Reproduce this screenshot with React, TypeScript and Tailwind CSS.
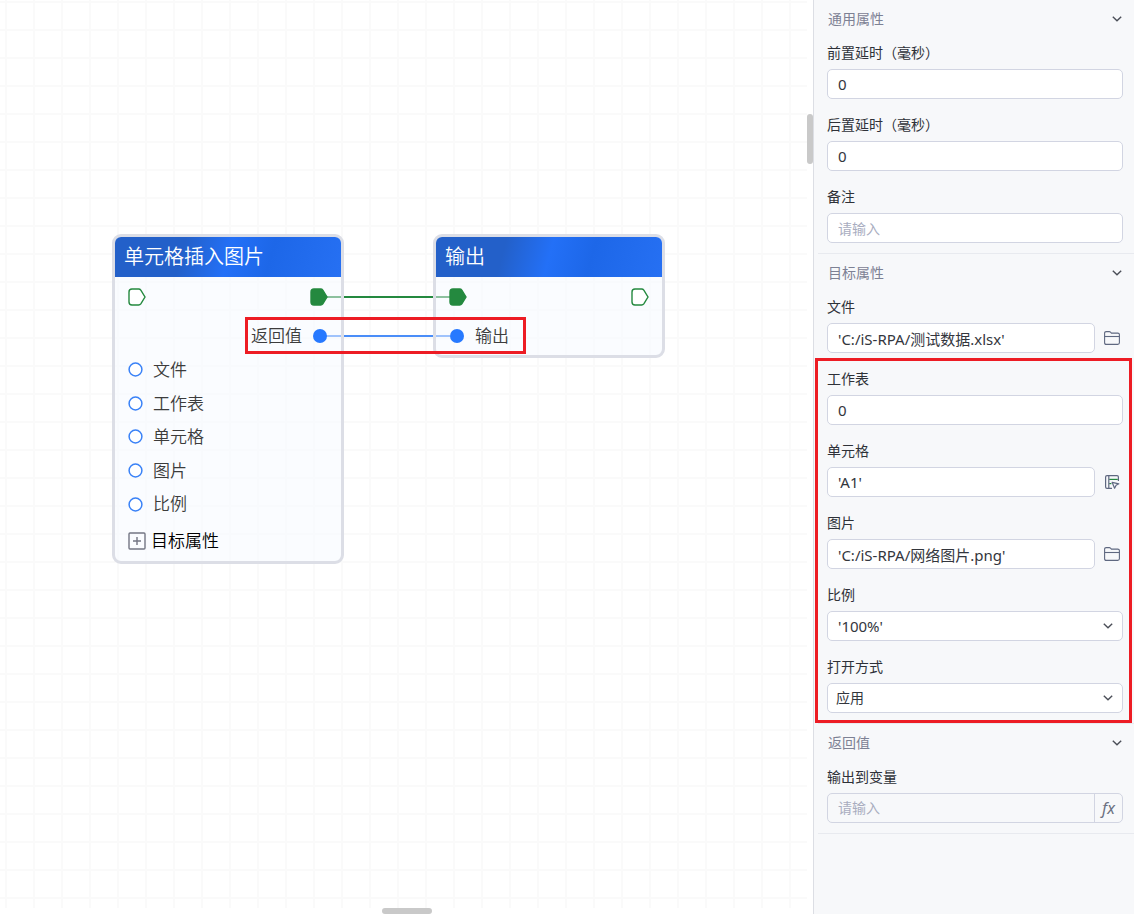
import type { ReactNode } from 'react';

interface FieldProps {
  id: string;
  label: string;
  children: ReactNode;
}

interface TextInputProps {
  id: string;
  value?: string;
  placeholder?: string;
}

interface SelectInputProps {
  id: string;
  options: string[];
  className: string;
}

const Chevron = ({ className }: { className: string }) => (
  <svg viewBox="0 0 10 6" className={className} fill="none" stroke="#4b4f58" strokeWidth="1.4">
    <path d="M0.8 0.8 5 4.8 9.2 0.8" />
  </svg>
);

const FolderIcon = () => (
  <svg viewBox="0 0 16 14" className="h-[14px] w-4" fill="none" stroke="#5f6880" strokeWidth="1.1">
    <path d="M0.6 2.2Q0.6 0.6 2.2 0.6H5.4Q6 0.6 6.5 1.2L7.4 2.1H13.8Q15.4 2.1 15.4 3.6V11.8Q15.4 13.4 13.8 13.4H2.2Q0.6 13.4 0.6 11.8Z" />
    <path d="M0.6 5.5H15.4" />
  </svg>
);

const CellPickIcon = () => (
  <svg viewBox="0 0 16 16" className="h-4 w-4" fill="none" stroke="#5f6880" strokeWidth="1.2">
    <path d="M5.2 5.4H13.8" stroke="#24893f" />
    <path d="M5.2 9.6H7.4" stroke="#24893f" />
    <path d="M8 14.4H3Q1.6 14.4 1.6 13V3Q1.6 1.6 3 1.6H13Q14.4 1.6 14.4 3V7" />
    <path d="M4.8 1.6V14.4" />
    <path d="M8.2 8.4 14.8 9.8 12.1 11.3 10.6 14.2Z" strokeLinejoin="round" />
  </svg>
);

const Field = ({ id, label, children }: FieldProps) => (
  <div className="flex flex-col gap-[6px]">
    <label htmlFor={id} className="text-sm leading-5 text-[#2e3138]">
      {label}
    </label>
    {children}
  </div>
);

const TextInput = ({ id, value, placeholder }: TextInputProps) => (
  <input
    id={id}
    type="text"
    defaultValue={value}
    placeholder={placeholder}
    className="h-[30px] w-full min-w-0 rounded-[5px] border border-[#d2d5e2] bg-white px-[10px] text-[15px] text-[#33363d] placeholder:text-sm placeholder:text-[#a9adbf]"
  />
);

const SelectInput = ({ id, options, className }: SelectInputProps) => (
  <div className="relative">
    <select
      id={id}
      className={`h-[30px] w-full appearance-none rounded-[5px] border border-[#d2d5e2] bg-white pr-8 text-[#33363d] ${className}`}
    >
      {options.map((option) => (
        <option key={option}>{option}</option>
      ))}
    </select>
    <Chevron className="pointer-events-none absolute top-3 right-[10px] h-[6px] w-[10px]" />
  </div>
);

const PickerInput = ({ id, value, title, icon }: TextInputProps & { title: string; icon: ReactNode }) => (
  <div className="flex items-center gap-[9px] pr-[3px]">
    <TextInput id={id} value={value} />
    <button type="button" aria-label={title} className="flex w-4 shrink-0 justify-center">
      {icon}
    </button>
  </div>
);

const Section = ({ title, children }: { title: string; children: ReactNode }) => (
  <section className="ml-1 border-b border-[#e8eaef] pr-[11px] pb-[10px] pl-[9px]">
    <button type="button" className="mb-[5px] flex h-[38px] w-full items-center justify-between px-[1px] text-sm text-[#7d8194]">
      {title}
      <Chevron className="h-[6px] w-[10px]" />
    </button>
    <div className="flex flex-col gap-4">{children}</div>
  </section>
);

const ExecPort = ({ filled = false }: { filled?: boolean }) => (
  <svg viewBox="0 0 18 18" className="h-[18px] w-[18px]" fill={filled ? '#24893f' : '#ffffff'} stroke="#24893f" strokeWidth="1.4">
    <path d="M4 1H10.6Q12 1 12.8 2.1L17 9 12.8 15.9Q12 17 10.6 17H4Q1 17 1 14V4Q1 1 4 1Z" />
  </svg>
);

const NodeCard = ({ title, className, children }: { title: string; className: string; children: ReactNode }) => (
  <div className={`absolute w-[232px] rounded-[9px] border-[3px] border-[#dcdee6] bg-[#f5f9ff]/50 text-[17px] font-[350] text-[#3c3c3c] ${className}`}>
    <h2 className="flex h-10 items-center rounded-t-[6px] bg-[linear-gradient(105deg,#2360c9_0%,#2360c9_30%,#2370f7_50%,#1d67e8_68%,#2670f3_100%)] px-[9px] text-xl text-white">
      {title}
    </h2>
    {children}
  </div>
);

const Canvas = () => (
  <main className="relative flex flex-1 overflow-hidden bg-white pr-[6px] pb-[6px]">
    <div className="flex-1 bg-[linear-gradient(to_right,#fafafa_2px,transparent_2px),linear-gradient(to_bottom,#fafafa_2px,transparent_2px)] bg-[length:28px_28px] bg-[position:5px_1px]" />

    <svg className="absolute top-0 left-0 h-[400px] w-[700px]" fill="none">
      <path d="M326 297H450" stroke="#24893f" strokeWidth="2" />
      <path d="M326 336H450" stroke="#4a8df8" strokeWidth="2" />
    </svg>

    <NodeCard title="单元格插入图片" className="top-[234px] left-[112px]">
      <div className="flex h-10 items-center justify-between px-[13px]">
        <ExecPort />
        <ExecPort filled />
      </div>
      <div className="flex h-[38px] items-center justify-end gap-[11px] pr-[14px]">
        返回值
        <span className="h-[14px] w-[14px] rounded-full bg-[#2779ff]" />
      </div>
      <ul className="-mt-[2px] grid h-[168px] grid-rows-5 pl-[13px]">
        {['文件', '工作表', '单元格', '图片', '比例'].map((name) => (
          <li key={name} className="flex items-center gap-[10px]">
            <svg viewBox="0 0 15 15" className="h-[15px] w-[15px]" fill="#ffffff" stroke="#3a82f7" strokeWidth="1.5">
              <circle cx="7.5" cy="7.5" r="6.4" />
            </svg>
            {name}
          </li>
        ))}
      </ul>
      <button type="button" className="flex h-10 items-center gap-[5px] pl-[13px] text-black">
        <svg viewBox="0 0 18 18" className="h-[18px] w-[18px]" fill="none" stroke="#737684" strokeWidth="1.4">
          <rect x="1" y="1" width="16" height="16" rx="1" />
          <path d="M5 9H13M9 5V13" />
        </svg>
        目标属性
      </button>
    </NodeCard>

    <NodeCard title="输出" className="top-[234px] left-[433px]">
      <div className="flex h-10 items-center justify-between px-[13px]">
        <ExecPort filled />
        <ExecPort />
      </div>
      <div className="flex h-[38px] items-center gap-[11px] pl-[14px]">
        <span className="h-[14px] w-[14px] rounded-full bg-[#2779ff]" />
        输出
      </div>
    </NodeCard>

    <div className="absolute top-[317px] left-[245px] h-[37px] w-[281px] border-[3px] border-[#ed1c24]" />

    <div className="absolute top-[114px] right-0 h-[50px] w-[6px] rounded-full bg-[#c9c9c9]" />
    <div className="absolute bottom-0 left-[382px] h-[6px] w-[50px] rounded-full bg-[#c9c9c9]" />
  </main>
);

const PropertyPanel = () => (
  <aside className="w-[321px] shrink-0 border-l border-[#dcdee4] bg-[#f7f8fa]">
    <Section title="通用属性">
      <Field id="delay-before" label="前置延时（毫秒）">
        <TextInput id="delay-before" value="0" />
      </Field>
      <Field id="delay-after" label="后置延时（毫秒）">
        <TextInput id="delay-after" value="0" />
      </Field>
      <Field id="remark" label="备注">
        <TextInput id="remark" placeholder="请输入" />
      </Field>
    </Section>

    <Section title="目标属性">
      <Field id="file" label="文件">
        <PickerInput id="file" value="'C:/iS-RPA/测试数据.xlsx'" title="选择文件" icon={<FolderIcon />} />
      </Field>
      <div className="relative flex flex-col gap-4">
        <Field id="sheet" label="工作表">
          <TextInput id="sheet" value="0" />
        </Field>
        <Field id="cell" label="单元格">
          <PickerInput id="cell" value="'A1'" title="选择单元格" icon={<CellPickIcon />} />
        </Field>
        <Field id="picture" label="图片">
          <PickerInput id="picture" value="'C:/iS-RPA/网络图片.png'" title="选择图片" icon={<FolderIcon />} />
        </Field>
        <Field id="scale" label="比例">
          <SelectInput id="scale" options={["'100%'", "'75%'", "'50%'"]} className="pl-[10px] text-[15px]" />
        </Field>
        <Field id="open-mode" label="打开方式">
          <SelectInput id="open-mode" options={['应用', '文件']} className="pl-2 text-sm" />
        </Field>
        <div className="pointer-events-none absolute -top-[11px] -right-[9px] -bottom-[10px] -left-3 border-[3px] border-[#ed1c24]" />
      </div>
    </Section>

    <Section title="返回值">
      <Field id="output-var" label="输出到变量">
        <div className="flex h-[30px] rounded-[5px] border border-[#d2d5e2]">
          <input
            id="output-var"
            type="text"
            placeholder="请输入"
            className="min-w-0 flex-1 px-[10px] text-sm placeholder:text-[#a9adbf]"
          />
          <button type="button" className="w-7 border-l border-[#d2d5e2] text-base leading-5 text-[#6b7080] italic">
            fx
          </button>
        </div>
      </Field>
    </Section>
  </aside>
);

export default function App() {
  return (
    <div className="flex min-h-screen font-['Noto_Sans','Noto_Sans_CJK_SC',sans-serif]">
      <Canvas />
      <PropertyPanel />
    </div>
  );
}
